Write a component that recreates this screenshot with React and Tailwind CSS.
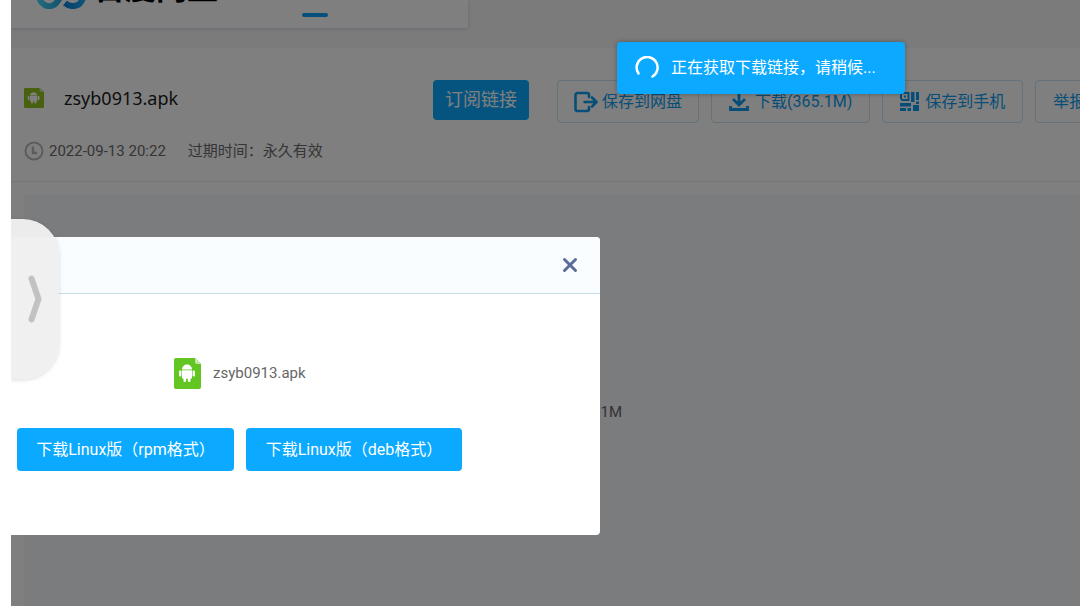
import React from "react";

const FONT_UI = "font-[Roboto,'Noto_Sans_CJK_SC',sans-serif]";

const BTN_BASE =
  "inline-flex items-center justify-center shrink-0 rounded whitespace-nowrap cursor-pointer";

const BTN_STYLES = {
  primary: "bg-[#0ba9ff] text-white",
  outline: "h-[43px] border border-[#c4e2f5] text-base text-[#0d9bee]",
};

function Button({ variant = "primary", className = "", children }) {
  return (
    <button
      type="button"
      className={`${BTN_BASE} ${BTN_STYLES[variant]} ${className}`}
    >
      {children}
    </button>
  );
}

function ApkIcon({ color, className = "" }) {
  return (
    <svg
      viewBox="0 0 27 31"
      preserveAspectRatio="none"
      className={`shrink-0 ${className}`}
      aria-hidden="true"
    >
      <path
        d="M2 0h19l6 6v23a2 2 0 0 1-2 2H2a2 2 0 0 1-2-2V2a2 2 0 0 1 2-2z"
        fill={color}
      />
      <path d="M21 0l6 6h-4a2 2 0 0 1-2-2z" fill="#c5e8a6" />
      <g fill="#fff">
        <path d="M8 11.500C8 8.500 10.300 6.500 13 6.500s5 2 5 5z" />
        <path d="M8 12.300h10v7a1.500 1.500 0 0 1-1.500 1.500h-7A1.500 1.500 0 0 1 8 19.300z" />
        <rect x="5" y="12.500" width="2.400" height="6" rx="1.100" />
        <rect x="18.600" y="12.500" width="2.400" height="6" rx="1.100" />
        <rect x="9.500" y="19" width="2.600" height="5" rx="1.200" />
        <rect x="13.900" y="19" width="2.600" height="5" rx="1.200" />
      </g>
    </svg>
  );
}

function LogoMark() {
  return (
    <svg viewBox="0 0 50 36" className="w-[50px] h-9 shrink-0" fill="none">
      <defs>
        <linearGradient id="logoLeft" x1="0" y1="0" x2="1" y2="0">
          <stop offset="0" stopColor="#46d0f5" />
          <stop offset="1" stopColor="#1c9cd8" />
        </linearGradient>
        <linearGradient id="logoRight" x1="0" y1="0" x2="1" y2="0">
          <stop offset="0" stopColor="#0c7fd8" />
          <stop offset="1" stopColor="#1ba5f5" />
        </linearGradient>
      </defs>
      <path
        d="M3 21a9.500 9.500 0 0 0 17 8L30 15"
        stroke="url(#logoLeft)"
        strokeWidth="6"
      />
      <path
        d="M28 30c5 4.500 16 5 18-6 0-4-1-8-5-10"
        stroke="url(#logoRight)"
        strokeWidth="6"
      />
    </svg>
  );
}

function ClockIcon() {
  return (
    <svg viewBox="0 0 20 20" className="size-5 shrink-0" fill="none">
      <circle cx="10" cy="10" r="8.500" stroke="#b8b8b8" strokeWidth="2" />
      <path d="M9 5.500v6.500h4" stroke="#b8b8b8" strokeWidth="2.500" />
    </svg>
  );
}

function SaveIcon() {
  return (
    <svg
      viewBox="0 0 24 20"
      className="w-6 h-5 shrink-0 overflow-visible"
      fill="none"
      stroke="currentColor"
      strokeWidth="2.600"
      strokeLinecap="round"
      strokeLinejoin="round"
    >
      <path d="M15 5V3a2 2 0 0 0-2-2H3.500a2 2 0 0 0-2 2v14a2 2 0 0 0 2 2H13a2 2 0 0 0 2-2v-2" />
      <path d="M10.500 10h12M18 5.500l4.500 4.500-4.500 4.500" />
    </svg>
  );
}

function DownloadIcon() {
  return (
    <svg
      viewBox="0 0 20 20"
      className="size-5 shrink-0"
      fill="none"
      stroke="currentColor"
      strokeWidth="2.800"
    >
      <path d="M10 0v12.500M4 7l6 6 6-6" />
      <path d="M1.500 14v3.500h17V14" />
    </svg>
  );
}

function QrIcon() {
  return (
    <svg
      viewBox="0 0 19 19"
      className="size-[19px] shrink-0"
      fill="currentColor"
    >
      <path
        fillRule="evenodd"
        d="M2 0h7.500v9H2L0 7V2zM2 2v5h5.500V2zM4 3.500h2v2H4z"
      />
      <path d="M11 0h3.500v10H11zM16 0h3v8h-3zM16 9.500h3V12h-3zM0 11h11v3.500H0zM13 13h6v6h-6zM0 16h6v3H0zM7.500 16H11v3H7.500z" />
    </svg>
  );
}

function TopBar() {
  return (
    <header className="w-[457px] h-7 overflow-hidden bg-white shadow-[0_1px_4px_rgba(60,80,150,0.2)]">
      <div className="flex items-end -mt-8 pl-[26px]">
        <LogoMark />
        <span className="ml-[7px] mb-[5px] text-[31px] leading-9 font-bold text-black font-['Noto_Sans_CJK_SC',sans-serif]">
          百度网盘
        </span>
        <span className="ml-[84px] -mb-2 w-[26px] h-1 rounded-full bg-[#0ba0f5]" />
      </div>
    </header>
  );
}

function FileHeader() {
  return (
    <section className="h-[134px] pt-8 pl-[13px] border-b border-[#eeeeee] bg-white">
      <div className="flex items-start">
        <div className="flex items-center h-9 w-[409px] shrink-0">
          <ApkIcon color="#8fc31f" className="w-5 h-5" />
          <h1 className="ml-5 text-lg text-[#1a1a1a] font-['Noto_Sans',sans-serif]">
            zsyb0913.apk
          </h1>
        </div>
        <Button className="h-10 w-[96px] mr-7 text-lg">订阅链接</Button>
        <div className="flex gap-3">
          <Button variant="outline" className="px-4 gap-1">
            <SaveIcon />
            保存到网盘
          </Button>
          <Button variant="outline" className="px-[17px] gap-[6px]">
            <DownloadIcon />
            下载(365.1M)
          </Button>
          <Button variant="outline" className="px-[17px] gap-[6px]">
            <QrIcon />
            保存到手机
          </Button>
          <Button variant="outline" className="px-[17px]">
            举报
          </Button>
        </div>
      </div>
      <div className="flex items-center mt-[18px] text-[15px] leading-5 text-[#6a6a6a]">
        <ClockIcon />
        <span className="ml-[5px]">2022-09-13 20:22</span>
        <span className="ml-[22px]">过期时间：永久有效</span>
      </div>
    </section>
  );
}

function DownloadDialog() {
  return (
    <div
      role="dialog"
      aria-label="下载"
      className="absolute left-0 top-[237px] w-[589px] rounded-r bg-white overflow-hidden"
    >
      <div className="flex items-center justify-end h-[57px] pr-[22px] border-b border-[#c8dde8] bg-[#f9fdff]">
        <button type="button" aria-label="关闭" className="cursor-pointer">
          <svg
            viewBox="0 0 16 16"
            className="size-4"
            stroke="#5c6c98"
            strokeWidth="3"
            strokeLinecap="round"
          >
            <path d="M2.500 2.500l11 11M13.500 2.500l-11 11" />
          </svg>
        </button>
      </div>
      <div className="pt-16 pb-16">
        <div className="flex items-center gap-3 pl-[163px]">
          <ApkIcon color="#62c522" className="w-[27px] h-[31px]" />
          <span className="text-[15px] text-[#666666]">zsyb0913.apk</span>
        </div>
        <div className="flex gap-3 mt-[39px] pl-[6px]">
          <Button className="h-[43px] w-[217px] text-base">
            下载Linux版（rpm格式）
          </Button>
          <Button className="h-[43px] w-[216px] text-base">
            下载Linux版（deb格式）
          </Button>
        </div>
      </div>
    </div>
  );
}

function Toast() {
  return (
    <div
      role="status"
      className="absolute left-[606px] top-[42px] flex items-center gap-3 h-[52px] w-[288px] pl-[18px] rounded bg-[#0ba9ff] text-base text-white whitespace-nowrap shadow-[0_0_5px_rgba(0,0,0,0.3)]"
    >
      <svg
        viewBox="0 0 24 24"
        className="size-6 shrink-0"
        fill="none"
        stroke="#fff"
        strokeWidth="2.500"
        strokeLinecap="round"
      >
        <path d="M3.500 17.500A10.500 10.500 0 1 1 17.500 20.500" />
      </svg>
      正在获取下载链接，请稍候...
    </div>
  );
}

function DrawerHandle() {
  return (
    <button
      type="button"
      aria-label="展开"
      className="absolute left-0 top-[219px] flex items-center justify-center h-40 w-12 rounded-r-[36px] bg-[#f0f0f0]/97 shadow-[0_1px_4px_rgba(0,0,0,0.15)] cursor-pointer"
    >
      <svg
        viewBox="0 0 14 48"
        className="w-[14px] h-12"
        fill="none"
        stroke="#c2c2c2"
        strokeWidth="6"
        strokeLinecap="round"
        strokeLinejoin="round"
      >
        <path d="M3.500 3.500L10.500 24L3.500 44.500" />
      </svg>
    </button>
  );
}

export default function App() {
  return (
    <div className={`min-h-screen flex pl-[11px] bg-white ${FONT_UI}`}>
      <div className="relative flex-1 min-w-0 flex flex-col overflow-hidden bg-[#f7f7f7]">
        <TopBar />
        <main className="mt-5 flex-1 flex flex-col bg-white">
          <FileHeader />
          <section className="mt-[13px] ml-[13px] flex-1 bg-[#f7f9fc]">
            <p className="w-[598px] pt-[205px] text-right text-[15px] leading-6 text-[#666666]">
              365.1M
            </p>
          </section>
        </main>
        <div className="absolute inset-0 bg-black/50" />
        <DownloadDialog />
        <Toast />
        <DrawerHandle />
      </div>
    </div>
  );
}
